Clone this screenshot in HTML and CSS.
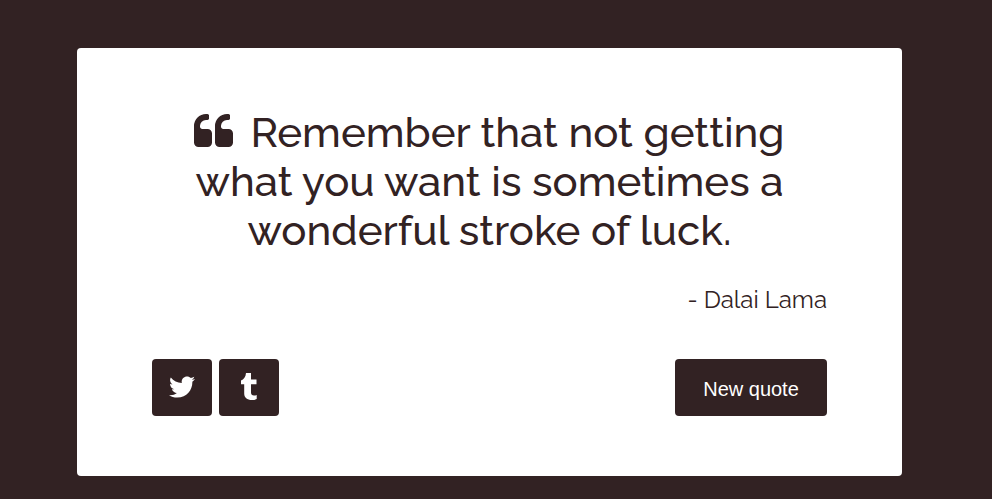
FILE: index.html
```html
<!DOCTYPE html>
<html lang="en">
<head>
<meta charset="utf-8">
<meta name="viewport" content="width=device-width, initial-scale=1">
<title>Quotes</title>
<link rel="stylesheet" href="styles.css">
</head>
<body>
<main class="quote-box">
  <blockquote class="quote-text"><svg class="quote-mark" viewBox="0 0 1664 1408" aria-hidden="true"><path d="M768 832v384q0 80-56 136t-136 56H192q-80 0-136-56T0 1216V512q0-104 40.500-198.500T150 150 313.500 40.500 512 0h64q26 0 45 19t19 45v128q0 26-19 45t-45 19h-64q-106 0-181 75t-75 181v32q0 40 28 68t68 28h224q80 0 136 56t56 136zm896 0v384q0 80-56 136t-136 56h-384q-80 0-136-56t-56-136V512q0-104 40.500-198.500T1046 150 1209.500 40.500 1408 0h64q26 0 45 19t19 45v128q0 26-19 45t-45 19h-64q-106 0-181 75t-75 181v32q0 40 28 68t68 28h224q80 0 136 56t56 136z"/></svg>Remember that not getting<br>what you want is sometimes a<br>wonderful stroke of luck.</blockquote>
  <p class="quote-author">- Dalai Lama</p>
  <div class="actions">
    <a class="button social" href="#" aria-label="Share on Twitter"><svg class="twitter" viewBox="0 0 512 512" aria-hidden="true"><path d="M459.370 151.716c.325 4.548.325 9.097.325 13.645 0 138.720-105.583 298.558-298.558 298.558-59.452 0-114.680-17.219-161.137-47.106 8.447.974 16.568 1.299 25.340 1.299 49.055 0 94.213-16.568 130.274-44.832-46.132-.975-84.792-31.188-98.112-72.772 6.498.974 12.995 1.624 19.818 1.624 9.421 0 18.843-1.300 27.614-3.573-48.081-9.747-84.143-51.980-84.143-102.985v-1.299c13.969 7.797 30.214 12.670 47.431 13.319-28.264-18.843-46.781-51.005-46.781-87.391 0-19.492 5.197-37.360 14.294-52.954 51.655 63.675 129.300 105.258 216.365 109.807-1.624-7.797-2.599-15.918-2.599-24.040 0-57.828 46.782-104.934 104.934-104.934 30.213 0 57.502 12.670 76.670 33.137 23.715-4.548 46.456-13.320 66.599-25.340-7.798 24.366-24.366 44.833-46.132 57.827 21.117-2.273 41.584-8.122 60.426-16.243-14.292 20.791-32.161 39.308-52.628 54.253z"/></svg></a>
    <a class="button social" href="#" aria-label="Share on Tumblr"><svg class="tumblr" viewBox="0 0 16 27" aria-hidden="true"><path d="M5 0h5v6.500h5.500v4.700H10v8.300c0 2 1 3 3 3 1 0 1.800-.2 2.700-.6v4.200c-1.200.7-2.900.9-4.700.9-5 0-7.800-2.500-7.800-6.500v-9.300H0V7.400C2.800 6.500 4.700 3.800 5 0z"/></svg></a>
    <button class="button new-quote" type="button">New quote</button>
  </div>
</main>
</body>
</html>
```
FILE: styles.css
```css
* {
  box-sizing: border-box;
}

body {
  margin: 0;
  padding: 48px 90px 23px 77px;
  background: #322223;
  color: #322223;
  font-family: Raleway, "Open Sans", sans-serif;
}

.quote-box {
  padding: 60px 75px;
  border-radius: 4px;
  background: #fff;
}

.quote-text {
  margin: 0;
  font-size: 42px;
  font-weight: 500;
  line-height: 49px;
  text-align: center;
}

.quote-mark {
  width: 39px;
  height: 33px;
  margin-right: 17px;
  fill: currentColor;
}

.quote-author {
  margin: 30px 0 44px;
  font-size: 24px;
  line-height: 30px;
  text-align: right;
}

.actions {
  display: flex;
  gap: 7px;
}

.button {
  display: flex;
  align-items: center;
  justify-content: center;
  height: 57px;
  border: 0;
  border-radius: 4px;
  background: #322223;
  color: #fff;
}

.social {
  width: 60px;
  padding-bottom: 2px;
}

.twitter {
  width: 26px;
  height: 26px;
  fill: currentColor;
}

.tumblr {
  width: 16px;
  height: 27px;
  fill: currentColor;
}

.new-quote {
  width: 152px;
  margin-left: auto;
  padding: 4px 0 0;
  font-family: "Liberation Sans", Arial, sans-serif;
  font-size: 20px;
}
```
